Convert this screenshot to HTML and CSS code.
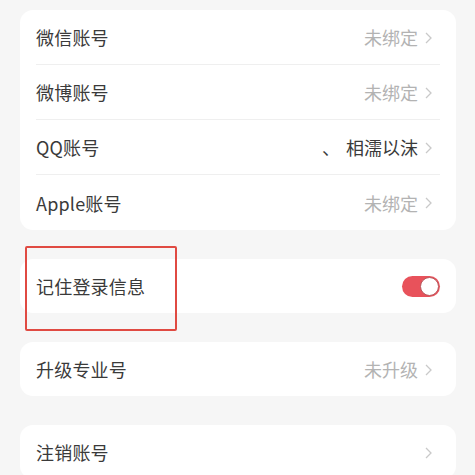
FILE: index.html
```html
<!DOCTYPE html>
<html lang="zh-CN">
<head>
<meta charset="utf-8">
<link rel="stylesheet" href="styles.css">
</head>
<body>
<div class="page">
  <div class="card">
    <div class="row sep"><span class="label">微信账号</span><span class="value">未绑定</span><span class="chev"><svg width="7" height="12" viewBox="0 0 7 12"><path d="M1 1 L6 6 L1 11" fill="none" stroke="#c9c9c9" stroke-width="1.3"/></svg></span></div>
    <div class="row sep"><span class="label">微博账号</span><span class="value">未绑定</span><span class="chev"><svg width="7" height="12" viewBox="0 0 7 12"><path d="M1 1 L6 6 L1 11" fill="none" stroke="#c9c9c9" stroke-width="1.3"/></svg></span></div>
    <div class="row sep"><span class="label">QQ账号</span><span class="value dark"><span class="dun">、</span>相濡以沫</span><span class="chev"><svg width="7" height="12" viewBox="0 0 7 12"><path d="M1 1 L6 6 L1 11" fill="none" stroke="#c9c9c9" stroke-width="1.3"/></svg></span></div>
    <div class="row"><span class="label">Apple账号</span><span class="value">未绑定</span><span class="chev"><svg width="7" height="12" viewBox="0 0 7 12"><path d="M1 1 L6 6 L1 11" fill="none" stroke="#c9c9c9" stroke-width="1.3"/></svg></span></div>
  </div>
  <div class="card single annotated">
    <div class="row"><span class="label">记住登录信息</span><span class="toggle"><span class="knob"></span></span></div>
    <div class="mark"></div>
  </div>
  <div class="card single">
    <div class="row"><span class="label">升级专业号</span><span class="value">未升级</span><span class="chev"><svg width="7" height="12" viewBox="0 0 7 12"><path d="M1 1 L6 6 L1 11" fill="none" stroke="#c9c9c9" stroke-width="1.3"/></svg></span></div>
  </div>
  <div class="card single">
    <div class="row"><span class="label">注销账号</span><span class="value"></span><span class="chev"><svg width="7" height="12" viewBox="0 0 7 12"><path d="M1 1 L6 6 L1 11" fill="none" stroke="#c9c9c9" stroke-width="1.3"/></svg></span></div>
  </div>
</div>
</body>
</html>
```
FILE: styles.css
```css
html, body {
  margin: 0;
  padding: 0;
  background: #f6f6f6;
  height: 475px;
  overflow: hidden;
}
body {
  font-family: "Noto Sans CJK SC", "Noto Sans", sans-serif;
  -webkit-font-smoothing: antialiased;
}
.page {
  padding: 10px 19px 0 20px;
  display: flex;
  flex-direction: column;
  gap: 29px;
}
.card {
  background: #ffffff;
  border-radius: 13px;
}
.card.annotated {
  position: relative;
}
.row {
  height: 55px;
  margin: 0 16px;
  padding-right: 8px;
  display: flex;
  align-items: center;
  box-sizing: border-box;
}
.single .row {
  height: 54px;
}
.row.sep {
  border-bottom: 1px solid #efefef;
}
.label {
  font-size: 18px;
  color: #3a3a3a;
  flex: 1;
  letter-spacing: 0.2px;
}
.value {
  font-size: 18px;
  color: #b3b3b3;
}
.value.dark {
  color: #3a3a3a;
}
.dun {
  margin-right: 6px;
}
.chev {
  display: flex;
  align-items: center;
  margin-left: 7px;
  margin-top: 1px;
}
.toggle {
  width: 38px;
  height: 21px;
  border-radius: 11px;
  background: #e8525b;
  position: relative;
  margin-right: -8px;
}
.knob {
  position: absolute;
  right: 1px;
  top: 1px;
  width: 17px;
  height: 17px;
  border-radius: 50%;
  background: #fff;
  border: 1px solid #b8585d;
}
.mark {
  position: absolute;
  left: 5px;
  top: -13px;
  width: 152px;
  height: 85px;
  box-sizing: border-box;
  border: 2px solid #e04a42;
  border-radius: 2px;
}
```
